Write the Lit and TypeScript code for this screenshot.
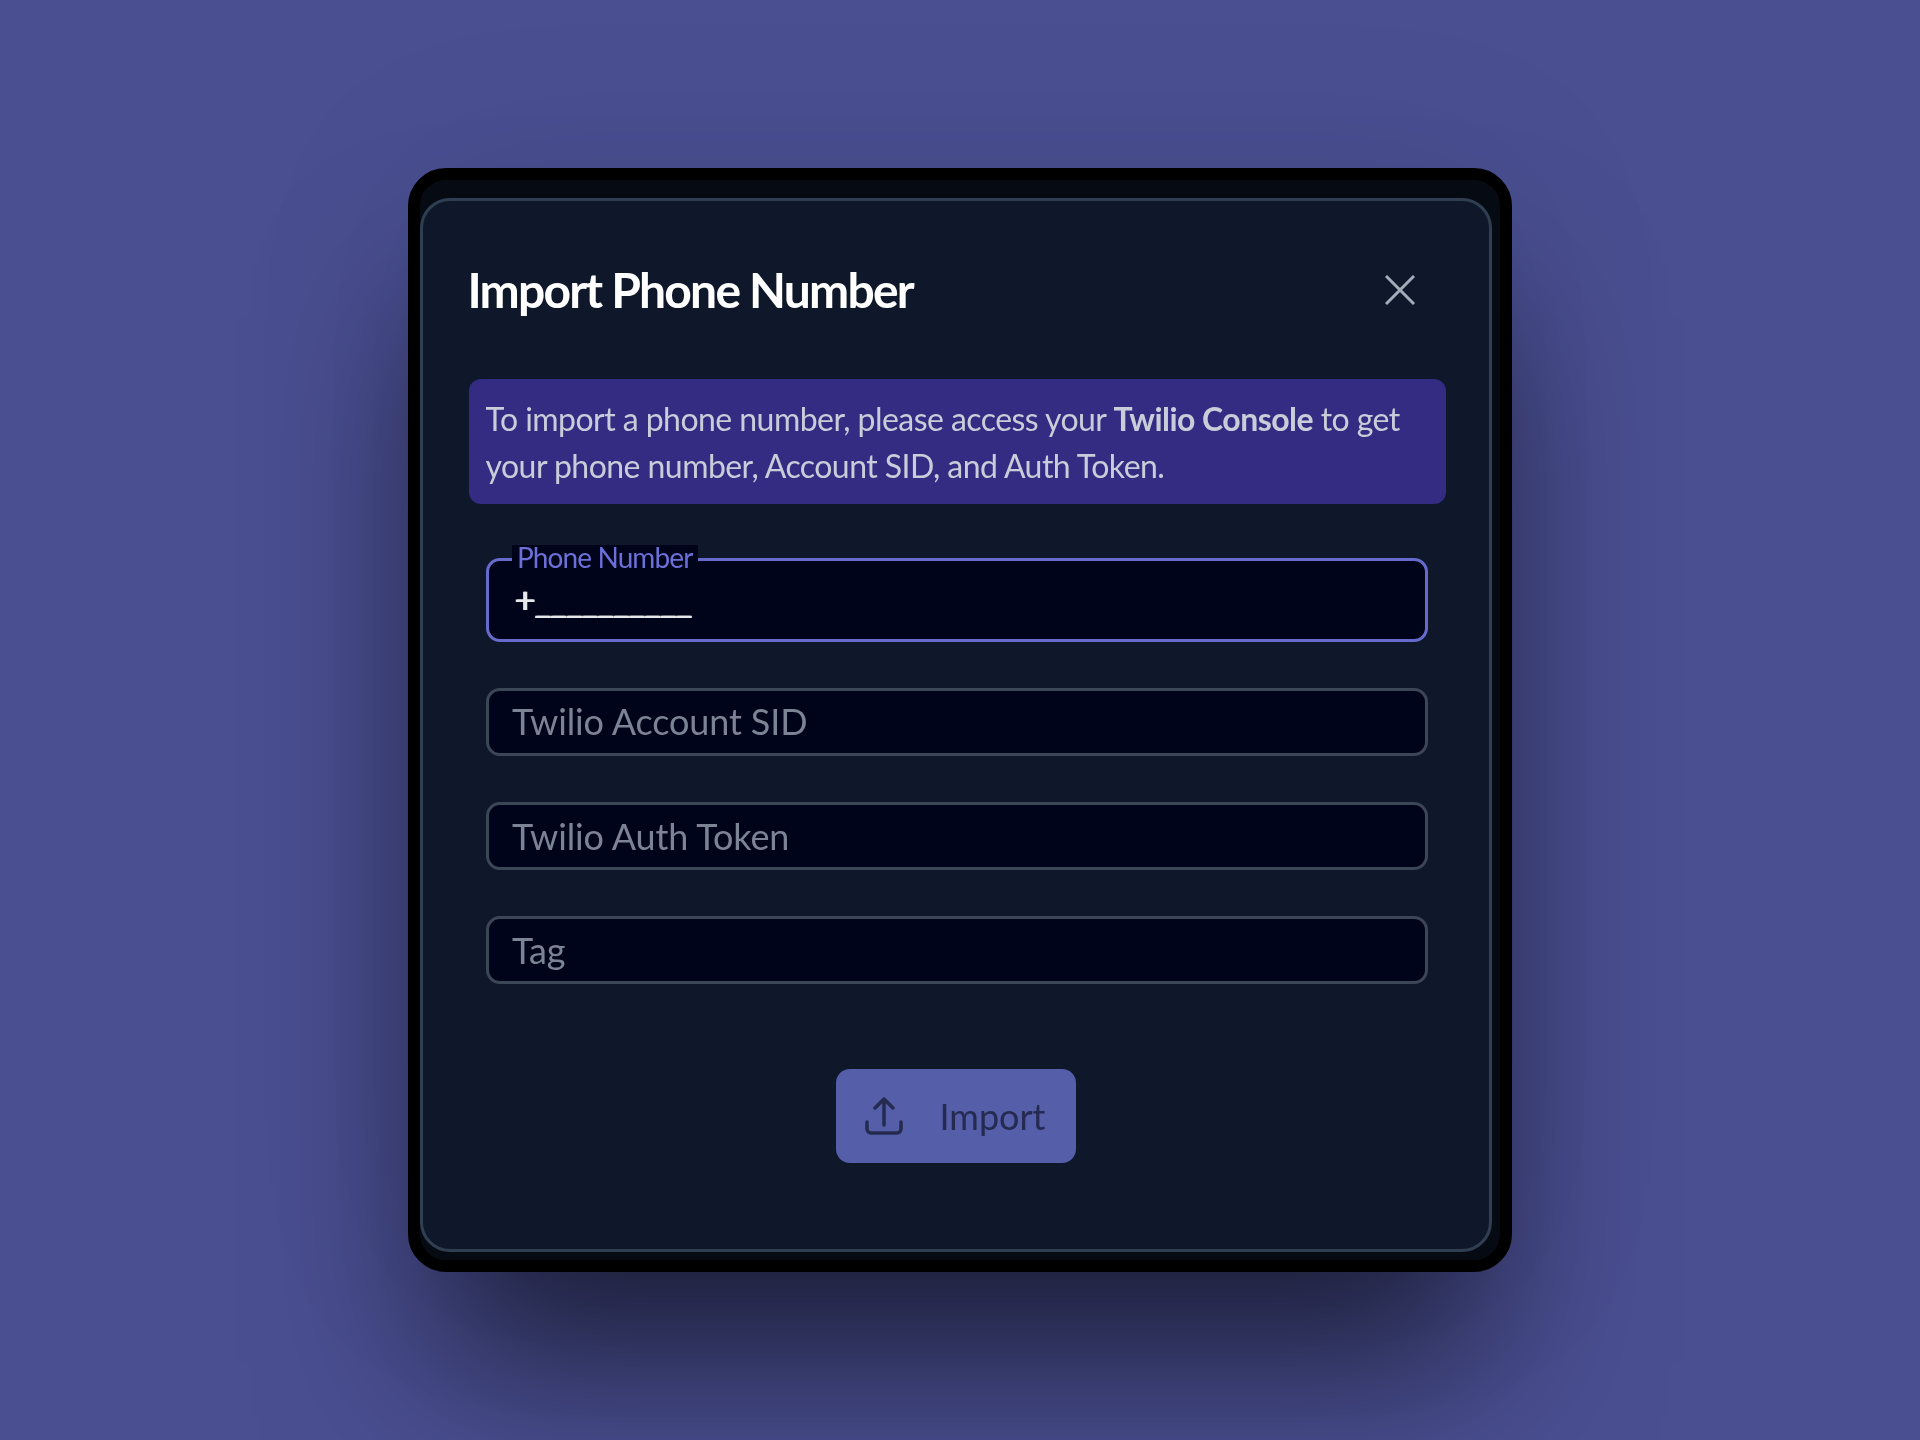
import { LitElement, html, css } from "lit";
import { customElement } from "lit/decorators.js";

@customElement("app-root")
export class AppRoot extends LitElement {
  static styles = css`
    :host {
      display: flex;
      width: 1920px;
      height: 1440px;
      align-items: center;
      justify-content: center;
      background: #4a4f92;
      font-family: Lato, "Liberation Sans", sans-serif;
    }
    * { box-sizing: border-box; }
    .frame {
      width: 1104px;
      height: 1104px;
      border: 12px solid #000;
      border-radius: 38px;
      background: #060a12;
      padding: 18px 8px 8px 0;
      box-shadow: 0 120px 170px -30px rgba(0, 0, 0, 0.6), 0 0 180px rgba(0, 0, 0, 0.08);
    }
    .panel {
      height: 100%;
      background: #0f172a;
      border: 3px solid #2f3e50;
      border-radius: 30px;
      padding: 59px 43.5px 0 45.5px;
      display: flex;
      flex-direction: column;
      filter: blur(0.7px);
    }
    .head {
      display: flex;
      align-items: center;
      justify-content: space-between;
      height: 60px;
      margin-bottom: 59px;
    }
    h2 {
      margin: 0 0 0 -1px;
      font-size: 48px;
      line-height: 60px;
      font-weight: 700;
      color: #fff;
      letter-spacing: -1.8px;
    }
    .close {
      display: block;
      width: 30px;
      height: 30px;
      margin-right: 31px;
      color: #a3acb9;
    }
    .alert {
      height: 125px;
      background: #332c82;
      border-radius: 12px;
      padding: 17px 17px;
      font-size: 32px;
      line-height: 46.5px;
      color: #c9cdda;
      letter-spacing: -0.55px;
    }
    .alert b { font-weight: 700; }
    .fields {
      display: flex;
      flex-direction: column;
      gap: 46px;
      margin: 54px 17.5px 0 17.5px;
    }
    .field { position: relative; display: block; }
    input {
      display: block;
      width: 100%;
      height: 68px;
      background: #00041a;
      border: 3px solid #3b4657;
      border-radius: 14px;
      outline: none;
      padding: 0 23px 2px 23px;
      font-family: inherit;
      font-size: 36px;
      color: #e5e7eb;
      letter-spacing: -0.12px;
    }
    input::placeholder { color: #7a8494; opacity: 1; }
    .field:nth-child(n + 3) input { padding-bottom: 0; }
    .phone input {
      height: 84px;
      border-color: #666bcb;
      padding: 0 20px 2px 25px;
      letter-spacing: -0.85px;
      text-shadow: 1.5px 0 0 #e5e7eb;
    }
    .phone span {
      position: absolute;
      left: 26px;
      top: -13px;
      height: 25px;
      line-height: 25px;
      padding: 0 6px 0 5px;
      background: #00041a;
      color: #6b70d8;
      font-size: 28px;
      letter-spacing: -0.9px;
    }
    .actions {
      display: flex;
      justify-content: center;
      margin-top: 85px;
      padding-right: 3px;
    }
    button {
      display: flex;
      align-items: center;
      gap: 36px;
      width: 240px;
      height: 94px;
      padding: 0 0 0 28px;
      border: none;
      border-radius: 14px;
      background: #555ea8;
      color: #252b50;
      font-family: inherit;
      font-size: 36px;
    }
    button svg { width: 40px; height: 40px; display: block; }
  `;

  render() {
    return html`
      <div class="frame">
        <div class="panel">
          <div class="head">
            <h2>Import Phone Number</h2>
            <svg class="close" viewBox="0 0 30 30" fill="none" stroke="currentColor" stroke-width="3">
              <path d="M1 1l28 28M29 1L1 29"></path>
            </svg>
          </div>
          <div class="alert">
            To import a phone number, please access your <b>Twilio Console</b> to get
            your phone number, Account SID, and Auth Token.
          </div>
          <div class="fields">
            <label class="field phone">
              <span>Phone Number</span>
              <input value="+__________" />
            </label>
            <label class="field"><input placeholder="Twilio Account SID" /></label>
            <label class="field"><input placeholder="Twilio Auth Token" /></label>
            <label class="field"><input placeholder="Tag" /></label>
          </div>
          <div class="actions">
            <button>
              <svg viewBox="0 0 40 40" fill="none" stroke="currentColor" stroke-width="3.5" stroke-linecap="round" stroke-linejoin="round">
                <path d="M20 29V3M11 12l9-9 9 9"></path>
                <path d="M3 26v7a4 4 0 0 0 4 4h26a4 4 0 0 0 4-4v-7"></path>
              </svg>
              Import
            </button>
          </div>
        </div>
      </div>
    `;
  }
}
